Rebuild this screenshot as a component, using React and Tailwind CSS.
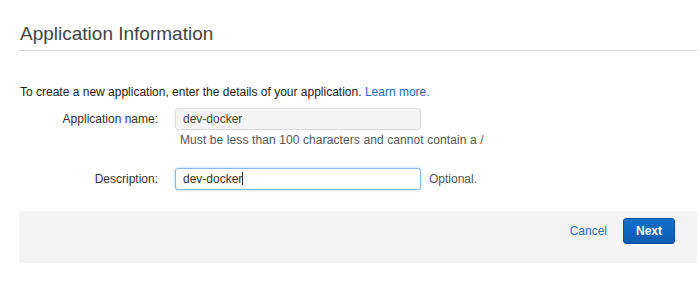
import React from 'react';

const font = { fontFamily: '"Liberation Sans", Arial, sans-serif' };

const App = () => {
  return (
    <div className="w-[700px] h-[289px] bg-white text-[#333]" style={font}>
      <div className="pl-[19px] pr-[3px] pt-[22px]">
        {/* Title */}
        <h1 className="text-[19px] leading-[24px] text-[#444] pl-px pb-[4px] border-b border-[#d5d5d5]">
          Application Information
        </h1>

        <p className="mt-[34px] pl-px text-[12px] leading-[14px] text-[#222]">
          To create a new application, enter the details of your application.{' '}
          <a className="text-[#1f66b3]" href="#">Learn more.</a>
        </p>

        {/* Form */}
        <div className="mt-[9px] flex items-start">
          <label className="w-[139px] text-right text-[12px] leading-[22px] text-[#333]">Application name:</label>
          <div className="ml-[17px]">
            <div className="w-[246px] h-[22px] rounded-[3px] border border-[#dcdcdc] bg-[#f4f4f4] px-[7px] text-[12px] leading-[20px] text-[#444]">
              dev-docker
            </div>
            <div className="mt-[3px] pl-[5px] text-[12px] tracking-[0.1px] leading-[14px] text-[#555]">
              Must be less than 100 characters and cannot contain a /
            </div>
          </div>
        </div>

        <div className="mt-[21px] flex items-center">
          <label className="w-[139px] text-right text-[12px] leading-[22px] text-[#333]">Description:</label>
          <div className="ml-[17px] w-[246px] h-[22px] rounded-[3px] border border-[#8cb8e6] shadow-[0_0_3px_rgba(80,150,230,0.5)] bg-white px-[7px] text-[12px] leading-[20px] text-[#333]">
            dev-docker<span className="inline-block w-px h-[13px] bg-[#333] align-[-2px]"></span>
          </div>
          <span className="ml-[8px] text-[12px] text-[#555]">Optional.</span>
        </div>

        {/* Footer */}
        <div className="mt-[21px] h-[52px] bg-[#f4f4f4] flex items-start justify-end pt-[7px] pr-[22px]">
          <a href="#" className="text-[12px] leading-[26px] text-[#2a6ebb] mr-[16px]">Cancel</a>
          <button className="w-[52px] h-[26px] rounded-[3px] border border-[#0a4f9a] bg-gradient-to-b from-[#1470cc] to-[#0a5cb0] text-white text-[12px] font-bold">
            Next
          </button>
        </div>
      </div>
    </div>
  );
};

export default App;
